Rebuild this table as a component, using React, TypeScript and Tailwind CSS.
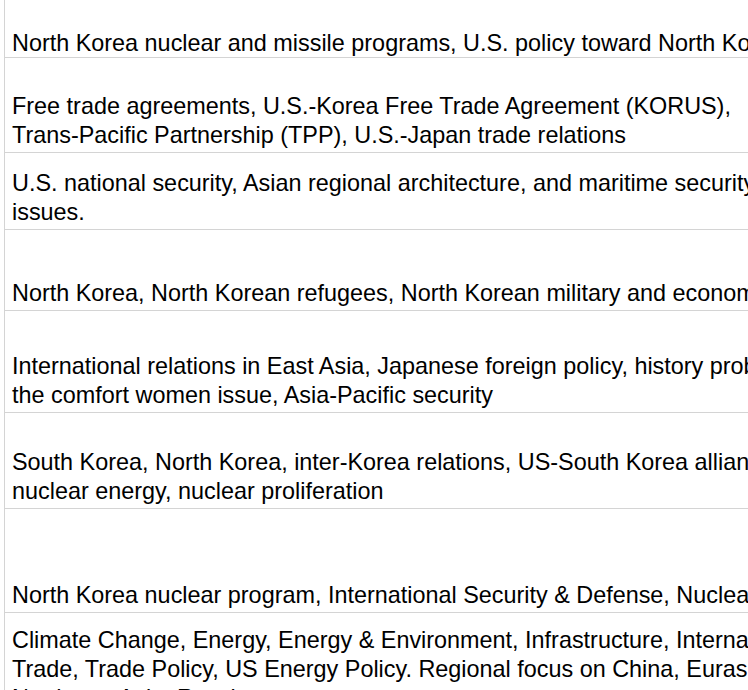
const rows: { h: string; lines: string[]; pt?: string }[] = [
  {
    h: 'h-[58px]',
    pt: 'pt-[29px]',
    lines: ['North Korea nuclear and missile programs, U.S. policy toward North Korea'],
  },
  {
    h: 'h-[95px]',
    lines: [
      'Free trade agreements, U.S.-Korea Free Trade Agreement (KORUS),',
      'Trans-Pacific Partnership (TPP), U.S.-Japan trade relations',
    ],
  },
  {
    h: 'h-[77px]',
    lines: ['U.S. national security, Asian regional architecture, and maritime security', 'issues.'],
  },
  { h: 'h-[81px]', lines: ['North Korea, North Korean refugees, North Korean military and economy'] },
  {
    h: 'h-[102px]',
    lines: [
      'International relations in East Asia, Japanese foreign policy, history problems,',
      'the comfort women issue, Asia-Pacific security',
    ],
  },
  {
    h: 'h-[96px]',
    lines: [
      'South Korea, North Korea, inter-Korea relations, US-South Korea alliance,',
      'nuclear energy, nuclear proliferation',
    ],
  },
  {
    h: 'h-[104px]',
    lines: ['North Korea nuclear program, International Security & Defense, Nuclear Issues'],
  },
  {
    h: 'h-[120px]',
    pt: 'pt-[13px]',
    lines: [
      'Climate Change, Energy, Energy & Environment, Infrastructure, International',
      'Trade, Trade Policy, US Energy Policy. Regional focus on China, Eurasia,',
      'Northeast Asia, Russia',
    ],
  },
]

export default function App() {
  return (
    <div className="h-[690px] w-[748px] overflow-hidden bg-white font-['Liberation_Sans',Arial,sans-serif] text-[23.4px] leading-[29px] text-black">
      <div className="ml-[4px] border-l border-[#d4d4d4]">
        {rows.map((row, i) => (
          <div
            key={i}
            className={`${row.h} flex flex-col border-b border-[#d4d4d4] pl-[7px] ${row.pt ? `justify-start ${row.pt}` : 'justify-end pb-[2px]'}`}
          >
            {row.lines.map((line) => (
              <div key={line} className="whitespace-nowrap">
                {line}
              </div>
            ))}
          </div>
        ))}
      </div>
    </div>
  )
}
